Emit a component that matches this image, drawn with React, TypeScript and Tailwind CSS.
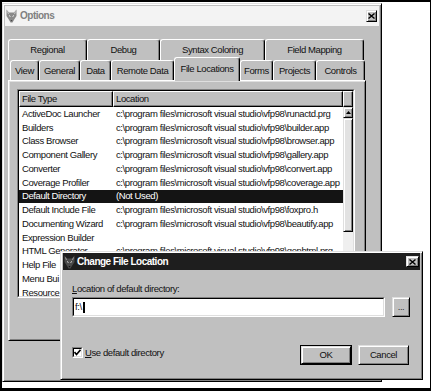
import React from 'react'

const raised =
  'border border-t-[#dfdfdf] border-l-[#dfdfdf] border-r-black border-b-black shadow-[inset_1px_1px_#fff,inset_-1px_-1px_#808080]'
const tab =
  'flex items-center justify-center whitespace-nowrap border-t border-l border-r border-t-white border-l-white border-r-black rounded-t-[3px] shadow-[inset_-1px_0_#808080] bg-[#c0c0c0]'

const topTabs = [
  { label: 'Regional', w: 'w-[79px]' },
  { label: 'Debug', w: 'w-[73px]' },
  { label: 'Syntax Coloring', w: 'w-[105px]' },
  { label: 'Field Mapping', w: 'w-[99px]' },
]

const lowTabs = [
  { label: 'View', w: 'w-[29px]' },
  { label: 'General', w: 'w-[41px]' },
  { label: 'Data', w: 'w-[31px]' },
  { label: 'Remote Data', w: 'w-[63px]' },
  { label: 'File Locations', w: 'w-[66px]', active: true },
  { label: 'Forms', w: 'w-[33px]' },
  { label: 'Projects', w: 'w-[43px]' },
  { label: 'Controls', w: 'w-[49px]' },
]

const vfp = 'c:\\program files\\microsoft visual studio\\vfp98\\'

// rows below HTML Generator sit under the dialog, only their names peek out
const rows = [
  ['ActiveDoc Launcher', vfp + 'runactd.prg'],
  ['Builders', vfp + 'builder.app'],
  ['Class Browser', vfp + 'browser.app'],
  ['Component Gallery', vfp + 'gallery.app'],
  ['Converter', vfp + 'convert.app'],
  ['Coverage Profiler', vfp + 'coverage.app'],
  ['Default Directory', '(Not Used)'],
  ['Default Include File', vfp + 'foxpro.h'],
  ['Documenting Wizard', vfp + 'beautify.app'],
  ['Expression Builder', ''],
  ['HTML Generator', vfp + 'genhtml.prg'],
  ['Help File', ''],
  ['Menu Bui', ''],
  ['Resource', ''],
]

// little fox head used as the window icon
function Fox({ light }: { light?: boolean }) {
  const fill = light ? '#8a8a8a' : '#4a4a4a'
  return (
    <svg width="11" height="14" viewBox="0 0 11 14">
      <path
        d="M0.5 0.5 L3 3.5 L8 3.5 L10.5 0.5 L10.5 7 L8.5 10 L6.5 13.5 L4.5 13.5 L2.5 10 L0.5 7 Z"
        fill={fill}
      />
      <path d="M1.5 2.5 L2.5 5 M9.5 2.5 L8.5 5" stroke={light ? '#c8c8c8' : '#999'} strokeWidth="1" />
      <path d="M3 6.5 L4.5 7.5 M8 6.5 L6.5 7.5" stroke={light ? '#eee' : '#ddd'} strokeWidth="1" />
      <path d="M4.5 11 L5.5 12.5 L6.5 11 Z" fill={light ? '#444' : '#111'} />
    </svg>
  )
}

function CloseBox({ w, h }: { w: string; h: string }) {
  return (
    <div className={`${w} ${h} ${raised} bg-[#c0c0c0] flex items-center justify-center`}>
      <svg width="7" height="6" viewBox="0 0 7 6">
        <path d="M0.5 0.5 L6.5 5.5 M6.5 0.5 L0.5 5.5" stroke="#000" strokeWidth="1.4" />
      </svg>
    </div>
  )
}

export default function App() {
  return (
    <div className="relative w-[431px] h-[391px] overflow-hidden bg-white border-black border-t-2 border-l-2 border-r border-b-[3px] font-['Liberation_Sans',Arial,sans-serif] text-[9.5px] tracking-[-0.4px] leading-[12px] text-[#111]">
      {/* Options window */}
      <div className={`mt-px w-[380px] h-[379px] bg-[#c0c0c0] ${raised}`}>
        <div className="mx-[2px] mt-[2px] h-[20px] flex items-center bg-[#f3f3f3]">
          <div className="ml-px">
            <Fox light />
          </div>
          <span className="ml-[3px] text-[10px] tracking-[-0.5px] font-bold text-[#808080]">Options</span>
          <div className="ml-auto mr-[2px]">
            <CloseBox w="w-[11px]" h="h-[12px]" />
          </div>
        </div>

        {/* tabs */}
        <div className="ml-[5px] mt-[13px] flex h-[21px]">
          {topTabs.map((t) => (
            <div key={t.label} className={`${tab} ${t.w} h-full`}>
              {t.label}
            </div>
          ))}
        </div>
        <div className="ml-[7px] flex h-[20px] items-end">
          {lowTabs.map((t) =>
            t.active ? (
              <div key={t.label} className={`${tab} ${t.w} relative z-10 -mb-px h-[24px] pb-[2px]`}>
                {t.label}
              </div>
            ) : (
              <div key={t.label} className={`${tab} ${t.w} h-full`}>
                {t.label}
              </div>
            )
          )}
        </div>

        {/* panel */}
        <div className="ml-[5px] w-[358px] h-[261px] border border-t-white border-l-white border-r-black border-b-black shadow-[inset_1px_1px_#dfdfdf,inset_-1px_-1px_#808080]">
          <div className="ml-[8px] mt-[8px] w-[338px] h-[209px] border border-t-[#808080] border-l-[#808080] border-r-white border-b-white">
            <div className="h-full flex flex-col overflow-hidden bg-white border border-t-black border-l-black border-r-[#dfdfdf] border-b-[#dfdfdf]">
              <div className="flex h-[16px] shrink-0 bg-[#c0c0c0]">
                <div className="w-[94px] flex items-center pl-[2px] border border-t-white border-l-white border-r-black border-b-black shadow-[inset_-1px_-1px_#808080]">
                  File Type
                </div>
                <div className="w-[230px] flex items-center pl-[2px] border border-t-white border-l-white border-r-black border-b-black shadow-[inset_-1px_-1px_#808080]">
                  Location
                </div>
                <div className="flex-1 border border-t-white border-l-white border-r-black border-b-black shadow-[inset_-1px_-1px_#808080]" />
              </div>
              <div className="flex flex-1 min-h-0">
                <div className="w-[324px] overflow-hidden">
                  {rows.map(([name, loc]) => (
                    <div
                      key={name}
                      className={`flex h-[13.75px] items-center whitespace-nowrap ${
                        name === 'Default Directory' ? 'bg-[#141414] text-white' : ''
                      }`}
                    >
                      <span className="w-[94px] shrink-0 pl-[3px]">{name}</span>
                      <span className="pl-[3px]">{loc}</span>
                    </div>
                  ))}
                </div>
                <div className="w-[10px] flex flex-col bg-[#efefef]">
                  <div className={`h-[11px] bg-[#c0c0c0] ${raised} flex items-center justify-center`}>
                    <svg width="5" height="3" viewBox="0 0 5 3">
                      <path d="M2.5 0 L5 3 L0 3 Z" fill="#000" />
                    </svg>
                  </div>
                  <div className={`h-[114px] bg-[#e2e2e2] ${raised}`} />
                </div>
              </div>
            </div>
          </div>
        </div>
      </div>

      {/* Change File Location dialog */}
      <div className={`absolute left-[58px] top-[249px] w-[363px] h-[129px] bg-[#c0c0c0] ${raised}`}>
        <div className="mx-[2px] mt-px h-[17px] flex items-center bg-[#1e1e1e]">
          <div className="ml-px">
            <Fox />
          </div>
          <span className="ml-[2px] text-[10px] tracking-[-0.5px] font-bold text-white">Change File Location</span>
          <div className="ml-auto mr-px">
            <CloseBox w="w-[13px]" h="h-[11px]" />
          </div>
        </div>
        <div className="px-[11px]">
          <div className="mt-[13px]">
            <span className="underline">L</span>ocation of default directory:
          </div>
          <div className="mt-[2px] flex">
            <div className="w-[313px] h-[20px] border border-t-[#808080] border-l-[#808080] border-r-white border-b-white">
              <div className="h-full flex items-center bg-white border border-t-black border-l-black border-r-[#dfdfdf] border-b-[#dfdfdf] pl-[1px]">
                <span>f:\</span>
                <span className="ml-px w-[2px] h-[11px] bg-black" />
              </div>
            </div>
            <div className={`ml-[7px] w-[18px] h-[20px] ${raised} flex items-center justify-center text-[#333]`}>
              ...
            </div>
          </div>
          <div className="mt-[28px] flex">
            <div className="mt-[2px] flex items-center h-[11px]">
              <div className="w-[11px] h-[11px] border border-t-[#808080] border-l-[#808080] border-r-white border-b-white">
                <div className="h-full bg-white border border-t-black border-l-black border-r-[#dfdfdf] border-b-[#dfdfdf] flex items-center justify-center">
                  <svg width="7" height="7" viewBox="0 0 7 7">
                    <path d="M0.5 3 L2.5 5.5 L6.5 0.8" stroke="#000" strokeWidth="1.6" fill="none" />
                  </svg>
                </div>
              </div>
              <span className="ml-[2px]">
                <span className="underline">U</span>se default directory
              </span>
            </div>
            <div className="ml-auto mr-[2px] flex gap-[6px]">
              <div className="w-[52px] h-[20px] border border-black">
                <div className={`h-full ${raised} flex items-center justify-center`}>OK</div>
              </div>
              <div className={`w-[51px] h-[20px] ${raised} flex items-center justify-center`}>Cancel</div>
            </div>
          </div>
        </div>
      </div>
    </div>
  )
}
